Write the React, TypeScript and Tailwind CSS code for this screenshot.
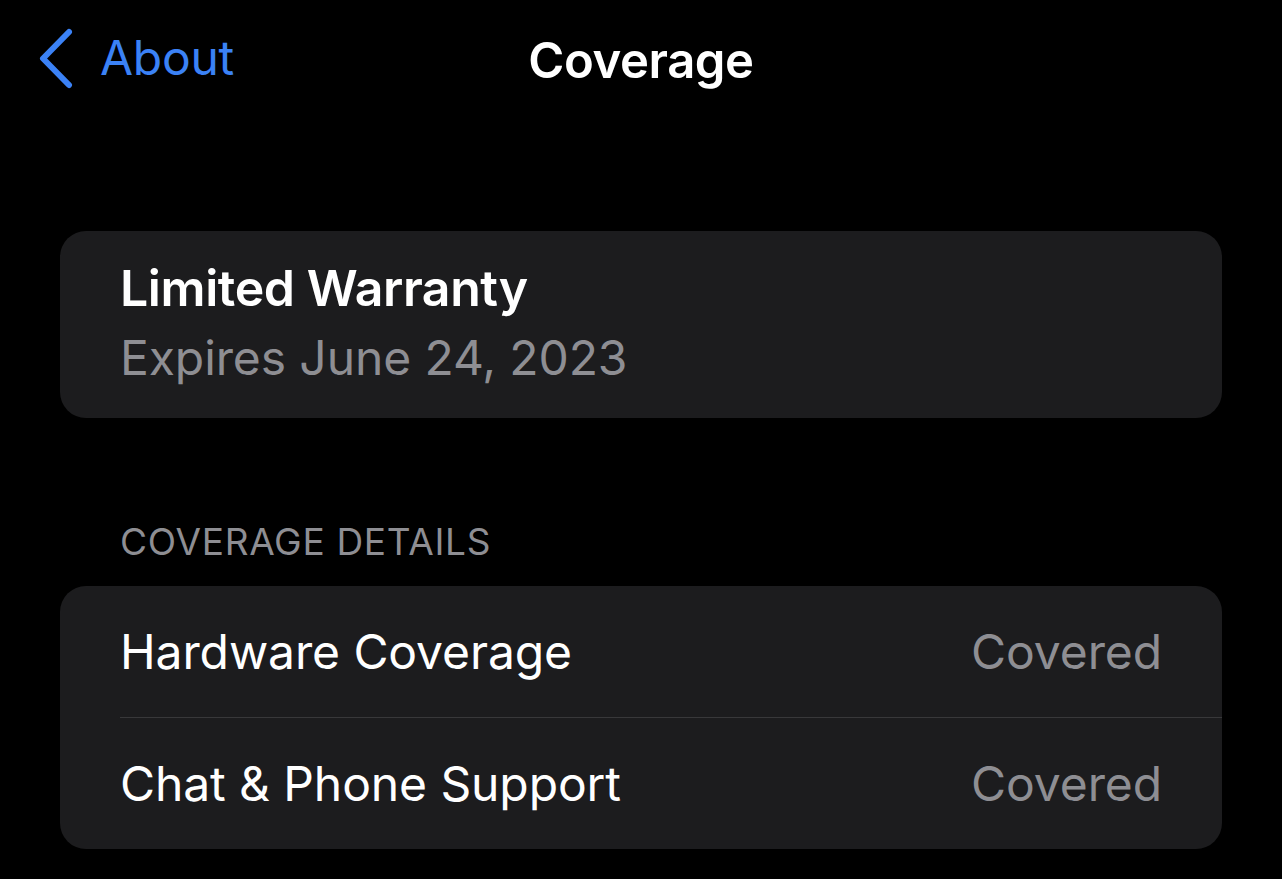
const rows = [
  { label: 'Hardware Coverage', value: 'Covered' },
  { label: 'Chat & Phone Support', value: 'Covered' },
];

export default function App() {
  return (
    <div
      className="min-h-screen w-full bg-black text-white"
      style={{ fontFamily: 'Inter, "Noto Sans", sans-serif' }}
    >
      {/* nav bar */}
      <header className="relative flex h-[118px] items-center justify-center">
        <button className="absolute left-[36px] top-[28px] flex items-center text-[#3b82f6]">
          <svg width="40" height="62" viewBox="0 0 40 62" fill="none">
            <path
              d="M33 4 L7 30.5 L33 57"
              stroke="currentColor"
              strokeWidth="6"
              strokeLinecap="round"
              strokeLinejoin="round"
            />
          </svg>
          <span className="ml-[24px] -mt-[2px] text-[48px] leading-none tracking-[-0.3px]">About</span>
        </button>
        <h1 className="mt-[2px] text-[49px] font-semibold leading-none tracking-[-0.4px]">Coverage</h1>
      </header>

      <main className="px-[60px] pt-[113px]">
        <section className="flex h-[187px] flex-col justify-center rounded-[26px] bg-[#1c1c1e] pl-[60px]">
          <div className="-mt-[4px] text-[50px] font-semibold leading-[70px] tracking-[-0.4px]">Limited Warranty</div>
          <div className="text-[48px] leading-[70px] tracking-[-0.1px] text-[#8e8e93]">Expires June 24, 2023</div>
        </section>

        <div className="pl-[60px] pt-[104px] pb-[24px] text-[37px] leading-[40px] tracking-[0.7px] text-[#8e8e93]">
          COVERAGE DETAILS
        </div>

        <section className="overflow-hidden rounded-[26px] bg-[#1c1c1e]">
          {rows.map((row, i) => (
            <div key={row.label} className="pl-[60px]">
              <div
                className={
                  'flex items-center justify-between pr-[60px] ' +
                  (i > 0 ? 'h-[132px] border-t border-[#38383a]' : 'h-[131px]')
                }
              >
                <span className="text-[48px] tracking-[-0.1px]">{row.label}</span>
                <span className="text-[48px] tracking-[-0.1px] text-[#8e8e93]">{row.value}</span>
              </div>
            </div>
          ))}
        </section>
      </main>
    </div>
  );
}
